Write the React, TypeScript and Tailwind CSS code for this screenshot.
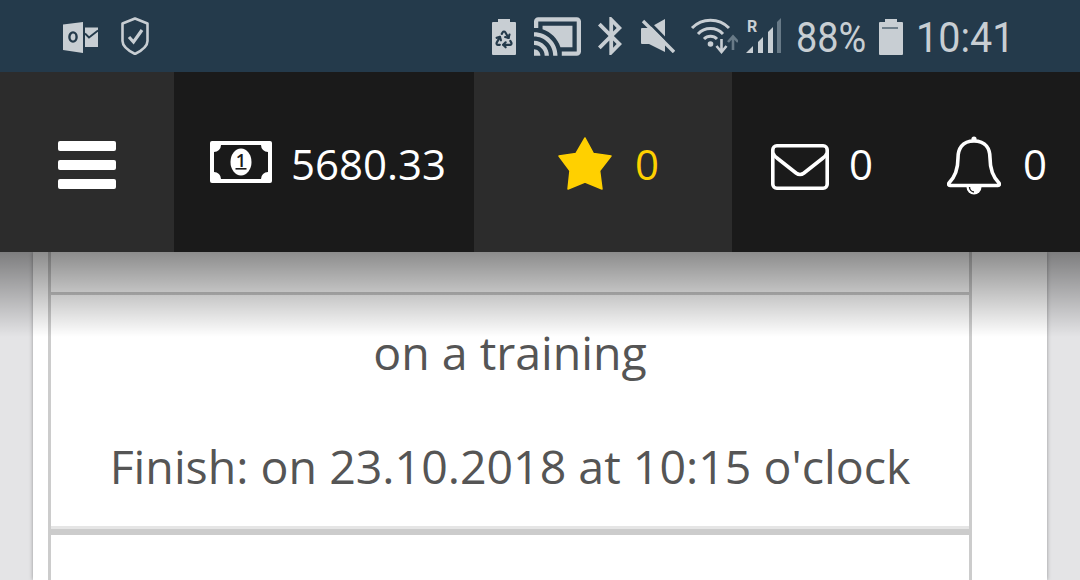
import { Recycle } from "lucide-react";

const ink = "#c8ced3";
const bar = "#243a4b";

function StatusBar() {
  return (
    <div className="flex h-[72px] items-center bg-[#243a4b] pl-[63px] font-['Roboto',sans-serif] text-[#c8ced3]">
      {/* Outlook */}
      <svg width="36" height="32" viewBox="0 0 36 32" className="mt-[3px]">
        <polygon points="0,2.5 20,0 20,31 0,28" fill={ink} />
        <ellipse cx="10" cy="15" rx="3.6" ry="4.6" fill="none" stroke={bar} strokeWidth="2.4" />
        <polygon points="22,5.5 35,5.5 35,25 22,25" fill={ink} />
        <path d="M22 11.5 L26 15.5 L35 8.5" fill="none" stroke={bar} strokeWidth="1.8" />
      </svg>
      {/* Shield */}
      <svg width="28" height="38" viewBox="0 0 28 38" className="ml-[22px]">
        <path d="M14 1.5 L26.5 6.5 V24 C26.5 30 18 35 14 37 C10 35 1.5 30 1.5 24 V6.5 Z" fill="none" stroke={ink} strokeWidth="2.6" strokeLinejoin="round" />
        <path d="M8 20 L12.5 25 L21 13" fill="none" stroke={ink} strokeWidth="3.2" />
      </svg>
      {/* Battery saver */}
      <svg width="24" height="36" viewBox="0 0 24 36" className="ml-[343px] mt-[1px]">
        <path d="M6 0 H18 V3 H23 Q24 3 24 4 V35 Q24 36 23 36 H1 Q0 36 0 35 V4 Q0 3 1 3 H6 Z" fill={ink} />
        <Recycle x={2} y={10} width={20} height={20} color={bar} strokeWidth={2.6} />
      </svg>
      {/* Cast */}
      <svg width="47" height="39" viewBox="1 3 22 18" className="ml-[18px]" fill={ink}>
        <path d="M19 7H5v1.63c3.96 1.28 7.09 4.41 8.37 8.37H19V7z" />
        <path d="M21 3H3c-1.1 0-2 .9-2 2v3h2V5h18v14h-7v2h7c1.1 0 2-.9 2-2V5c0-1.1-.9-2-2-2zM1 18v3h3c0-1.66-1.34-3-3-3zm0-4v2c2.76 0 5 2.24 5 5h2c0-3.87-3.13-7-7-7zm0-4v2c4.97 0 9 4.03 9 9h2c0-6.08-4.93-11-11-11z" />
      </svg>
      {/* Bluetooth */}
      <svg width="24" height="38" viewBox="5 2 12.71 20" className="ml-[17px]" fill={ink}>
        <path d="M17.71 7.71L12 2h-1v7.59L6.41 5 5 6.41 10.59 12 5 17.59 6.41 19 11 14.41V22h1l5.71-5.71-4.3-4.29 4.3-4.29zM13 5.83l1.88 1.88L13 9.59V5.83zm1.88 10.46L13 18.17v-3.76l1.88 1.88z" />
      </svg>
      {/* Mute */}
      <svg width="34" height="34" viewBox="0 0 34 34" className="ml-[19px] -mt-[1px]">
        <path d="M0 10 Q0 9 1 9 H8 L24 0 V33 L8 25 H1 Q0 25 0 24 Z" fill={ink} />
        <path d="M5 0 L34 30" stroke={bar} strokeWidth="3" />
        <path d="M2 2 L33 33" stroke={ink} strokeWidth="3.4" />
      </svg>
      {/* Wifi */}
      <svg width="48" height="36" viewBox="0 0 48 36" className="ml-[15px]">
        <g fill="none" stroke={ink} strokeWidth="3">
          <path d="M2 10 A26 26 0 0 1 39 10" />
          <path d="M8 16 A17 17 0 0 1 33 16" />
          <path d="M14 21 A9 9 0 0 1 27 21" />
        </g>
        <circle cx="20.5" cy="26" r="2.8" fill={ink} />
        <path d="M31.5 21 V33 M26.5 28 L31.5 34 L36.5 28" fill="none" stroke={ink} strokeWidth="2.6" />
        <path d="M43 32 V19 M38 24 L43 18.5 L48 24" fill="none" stroke="#687a87" strokeWidth="2.6" />
      </svg>
      {/* Signal */}
      <div className="relative ml-[7px] h-[36px] w-[36px]">
        <span className="absolute left-[2px] top-[1px] text-[16px] font-bold leading-[16px]">R</span>
        <svg width="36" height="36" viewBox="0 0 36 36" className="absolute left-0 top-0">
          <polygon points="1,35 8,28 8,35" fill={ink} />
          <polygon points="13,24 18,19 18,35 13,35" fill={ink} />
          <polygon points="23,14 28,9 28,35 23,35" fill={ink} />
          <polygon points="32,4 36,0 36,35 32,35" fill="#687a87" />
        </svg>
      </div>
      {/* Percent */}
      <div className="ml-[15px] mt-[4px] w-[70px]">
        <span className="inline-block origin-left scale-x-[0.9] text-[42px] leading-none">88%</span>
      </div>
      {/* Battery */}
      <svg width="24" height="36" viewBox="0 0 24 36" className="ml-[13px] mt-[1px]">
        <path d="M6 0 H18 V3 H23 Q24 3 24 4 V35 Q24 36 23 36 H1 Q0 36 0 35 V4 Q0 3 1 3 H6 Z" fill={ink} />
        <rect x="3" y="8" width="16" height="2" fill="#6f7f8b" />
      </svg>
      <div className="ml-[13px] mt-[4px] w-[96px]">
        <span className="inline-block origin-left scale-x-[0.94] text-[42px] leading-none">10:41</span>
      </div>
    </div>
  );
}

function NavBar() {
  return (
    <div className="relative z-20 flex h-[180px] bg-[#1a1a1a] font-['Open_Sans',sans-serif] text-[42px] leading-none text-white">
      <div className="flex w-[174px] items-center justify-center bg-[#2c2c2c]">
        <svg width="58" height="48" viewBox="0 0 58 48" fill="#fff" className="-ml-[1px] mt-[6px]">
          <rect x="0" y="0" width="58" height="10" rx="2" />
          <rect x="0" y="19" width="58" height="10" rx="2" />
          <rect x="0" y="38" width="58" height="10" rx="2" />
        </svg>
      </div>
      <div className="flex w-[300px] items-center pl-[36px]">
        <svg width="62" height="42" viewBox="0 0 62 42">
          <rect width="62" height="42" rx="2" fill="#fff" />
          <path d="M11 4 H51 A7 7 0 0 0 58 11 V31 A7 7 0 0 0 51 38 H11 A7 7 0 0 0 4 31 V11 A7 7 0 0 0 11 4 Z" fill="#1a1a1a" />
          <ellipse cx="31" cy="21" rx="10.5" ry="13.5" fill="#fff" />
          <text x="31" y="26" textAnchor="middle" fontSize="18" fontWeight="600" fontFamily="Open Sans, sans-serif" fill="#1a1a1a">1</text>
          <rect x="25.5" y="27" width="11" height="1.6" fill="#1a1a1a" />
        </svg>
        <span className="ml-[19px] mt-[3px]">5680.33</span>
      </div>
      <div className="flex w-[258px] items-center bg-[#2c2c2c] pl-[84px] text-[#ffd000]">
        <svg width="54" height="53" viewBox="0 0 54 53" className="mt-[2px]">
          <polygon points="27,1 35.4,16.5 53,19 41.6,33.7 44,52 27,45 10,52 12,33.7 1,19 18,16.5" fill="#ffd000" stroke="#ffd000" strokeWidth="1.5" strokeLinejoin="round" />
        </svg>
        <span className="ml-[23px] mt-[3px]">0</span>
      </div>
      <div className="flex flex-1 items-center pl-[39px]">
        <svg width="58" height="46" viewBox="0 0 58 46" fill="none" stroke="#fff" strokeWidth="3.6" className="mt-[10px]">
          <rect x="1.8" y="1.8" width="54.4" height="42.4" rx="4" />
          <path d="M2 9 Q3 12 6 14 L25 29 Q29 32 33 29 L52 14 Q55 12 56 9" />
        </svg>
        <span className="ml-[20px] mt-[3px]">0</span>
        <svg width="54" height="60" viewBox="0 0 54 60" className="ml-[74px] mt-[7px]">
          <circle cx="27" cy="3" r="2.6" fill="#fff" />
          <path d="M27 5 C15 5 11 13 11 22 C11 35 7 42 2 47 Q1 49.5 3 49.5 H51 Q53 49.5 52 47 C47 42 43 35 43 22 C43 13 39 5 27 5 Z" fill="none" stroke="#fff" strokeWidth="3.6" strokeLinejoin="round" />
          <path d="M19.5 51 A7.5 7.5 0 0 0 34.5 51 Z" fill="#fff" />
          <path d="M22.5 51 A5 5 0 0 0 27 56" fill="none" stroke="#1a1a1a" strokeWidth="1.4" />
        </svg>
        <span className="ml-[22px] mt-[3px]">0</span>
      </div>
    </div>
  );
}

function Content() {
  return (
    <div className="relative flex-1 overflow-hidden bg-[#e4e4e6] px-[33px]">
      <div className="h-full w-[1014px] bg-white pl-[15px] shadow-[0_0_4px_rgba(0,0,0,0.35)]">
        <div className="h-full w-[924px] border-x-[3px] border-x-[#cccccc] font-['Open_Sans',sans-serif] text-[#555555]">
          <div className="box-content h-[40px] border-b-[3px] border-b-[#cccccc]" />
          <div className="flex h-[231px] flex-col items-center text-[46.5px] leading-[60px]">
            <p className="mt-[27px]">on a training</p>
            <p className="mt-[54px]">Finish: on 23.10.2018 at 10:15 o'clock</p>
          </div>
          <div className="h-[3px] bg-[#e5e5e5]" />
          <div className="h-[6px] bg-[#cccccc]" />
        </div>
      </div>
      {/* shadow under the nav */}
      <div className="absolute inset-x-0 top-0 h-[85px] bg-gradient-to-b from-black/45 to-transparent" />
    </div>
  );
}

export default function App() {
  return (
    <div className="flex h-[580px] w-[1080px] flex-col overflow-hidden">
      <StatusBar />
      <NavBar />
      <Content />
    </div>
  );
}
